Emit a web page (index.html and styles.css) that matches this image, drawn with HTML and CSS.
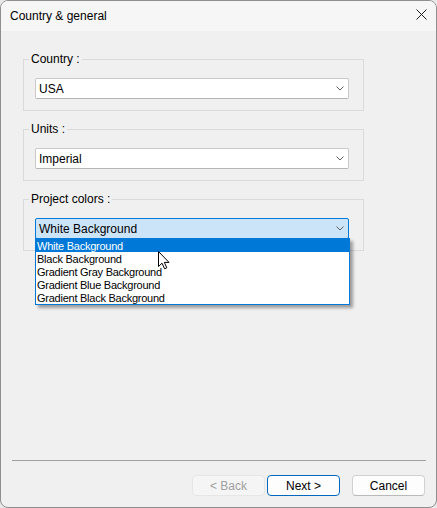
FILE: index.html
```html
<!DOCTYPE html>
<html>
<head>
  <title>Country &amp; general</title>
  <link rel="stylesheet" href="styles.css">
</head>
<body>
  <div class="window">
    <div class="titlebar">
      <span class="title">Country &amp; general</span>
      <svg class="close" width="11" height="11" viewBox="0 0 11 11">
        <path d="M0.5 0.5 L10.5 10.5 M10.5 0.5 L0.5 10.5" stroke="#1b1b1b" stroke-width="1" fill="none"/>
      </svg>
    </div>

    <div class="content">
      <fieldset class="group">
        <legend>Country :</legend>
        <div class="combo">
          <span>USA</span>
          <svg class="chevron" width="8" height="5" viewBox="0 0 8 5"><path d="M0.5 0.5 L4 4 L7.5 0.5" stroke="#5f5f5f" fill="none"/></svg>
        </div>
      </fieldset>

      <fieldset class="group">
        <legend>Units :</legend>
        <div class="combo">
          <span>Imperial</span>
          <svg class="chevron" width="8" height="5" viewBox="0 0 8 5"><path d="M0.5 0.5 L4 4 L7.5 0.5" stroke="#5f5f5f" fill="none"/></svg>
        </div>
      </fieldset>

      <fieldset class="group">
        <legend>Project colors :</legend>
        <div class="combo-wrap">
          <div class="combo open">
            <span>White Background</span>
            <svg class="chevron" width="8" height="5" viewBox="0 0 8 5"><path d="M0.5 0.5 L4 4 L7.5 0.5" stroke="#5f5f5f" fill="none"/></svg>
          </div>
          <ul class="dropdown">
            <li class="selected">White Background</li>
            <li>Black Background</li>
            <li>Gradient Gray Background</li>
            <li>Gradient Blue Background</li>
            <li>Gradient Black Background</li>
          </ul>
          <svg class="cursor" width="13" height="19" viewBox="0 0 13 19">
            <path d="M0.5 0.5 L0.5 15.5 L4 12.2 L6.6 17.8 L8.8 16.8 L6.3 11.4 L11 11.4 Z" fill="#fff" stroke="#000" stroke-width="1" stroke-linejoin="miter"/>
          </svg>
        </div>
      </fieldset>
    </div>

    <div class="footer">
      <div class="separator"></div>
      <div class="buttons">
        <button class="btn disabled">&lt; Back</button>
        <button class="btn primary">Next &gt;</button>
        <button class="btn cancel">Cancel</button>
      </div>
    </div>
  </div>
</body>
</html>
```

FILE: styles.css
```css
html {
  background: #e9e9e9;
}
body {
  margin: 0;
  font-family: "Liberation Sans", Arial, sans-serif;
  font-size: 12px;
  color: #000;
}
.window {
  width: 437px;
  height: 508px;
  box-sizing: border-box;
  border: 1px solid #8f8f8f;
  border-radius: 8px;
  background: #f0f0f0;
  display: flex;
  flex-direction: column;
  overflow: hidden;
}
.titlebar {
  height: 30px;
  flex-shrink: 0;
  background: #f6f6f6;
  display: flex;
  align-items: center;
  justify-content: space-between;
  padding: 0 9px 0 9px;
}
.title {
  margin-top: -1px;
}
.close {
  margin-top: -3px;
  margin-right: 0;
}
.content {
  flex: 1;
  padding: 21px 0 0 22px;
}
.group {
  width: 341px;
  box-sizing: border-box;
  margin: 0 0 11px 0;
  padding: 11px 14px 11px 11px;
  border: 1px solid #dadada;
  min-width: 0;
}
.group legend {
  padding: 0 2px;
  margin-left: -6px;
  line-height: 15px;
}
.combo {
  height: 21px;
  box-sizing: border-box;
  border: 1px solid #c9c9c9;
  border-bottom-color: #b5b5b5;
  border-radius: 2px;
  background: #fff;
  display: flex;
  align-items: center;
  justify-content: space-between;
  padding: 0 4px 0 3px;
}
.combo.open {
  background: #cce4f7;
  border-color: #0078d7;
}
.combo-wrap {
  position: relative;
}
.dropdown {
  position: absolute;
  top: 20px;
  left: 0;
  width: 315px;
  box-sizing: border-box;
  margin: 0;
  padding: 0;
  list-style: none;
  background: #fff;
  border: 1px solid #0078d7;
  box-shadow: 3px 3px 3px rgba(0, 0, 0, 0.35);
  z-index: 2;
}
.dropdown li {
  height: 12px;
  padding-top: 1px;
  line-height: 13px;
  padding-left: 1px;
  font-size: 11px;
  letter-spacing: -0.25px;
}
.dropdown li.selected {
  background: #0078d7;
  color: #fff;
}
.cursor {
  position: absolute;
  left: 123px;
  top: 33px;
  z-index: 3;
}
.footer {
  flex-shrink: 0;
  padding-bottom: 11px;
}
.separator {
  height: 1px;
  margin: 0 10px 0 11px;
  background: #a0a0a0;
}
.buttons {
  display: flex;
  justify-content: flex-end;
  margin-top: 14px;
  padding-right: 11px;
}
.btn {
  width: 73px;
  height: 21px;
  box-sizing: border-box;
  font-family: "Liberation Sans", Arial, sans-serif;
  font-size: 12px;
  color: #000;
  background: #fdfdfd;
  border: 1px solid #d1d1d1;
  border-bottom-color: #b9b9b9;
  border-radius: 4px;
  padding: 0;
}
.btn.disabled {
  background: #f5f5f5;
  border-color: #e6e6e6;
  color: #a0a0a0;
  margin-right: 2px;
}
.btn.primary {
  border: 1px solid #0067c0;
  margin-right: 12px;
}
```
